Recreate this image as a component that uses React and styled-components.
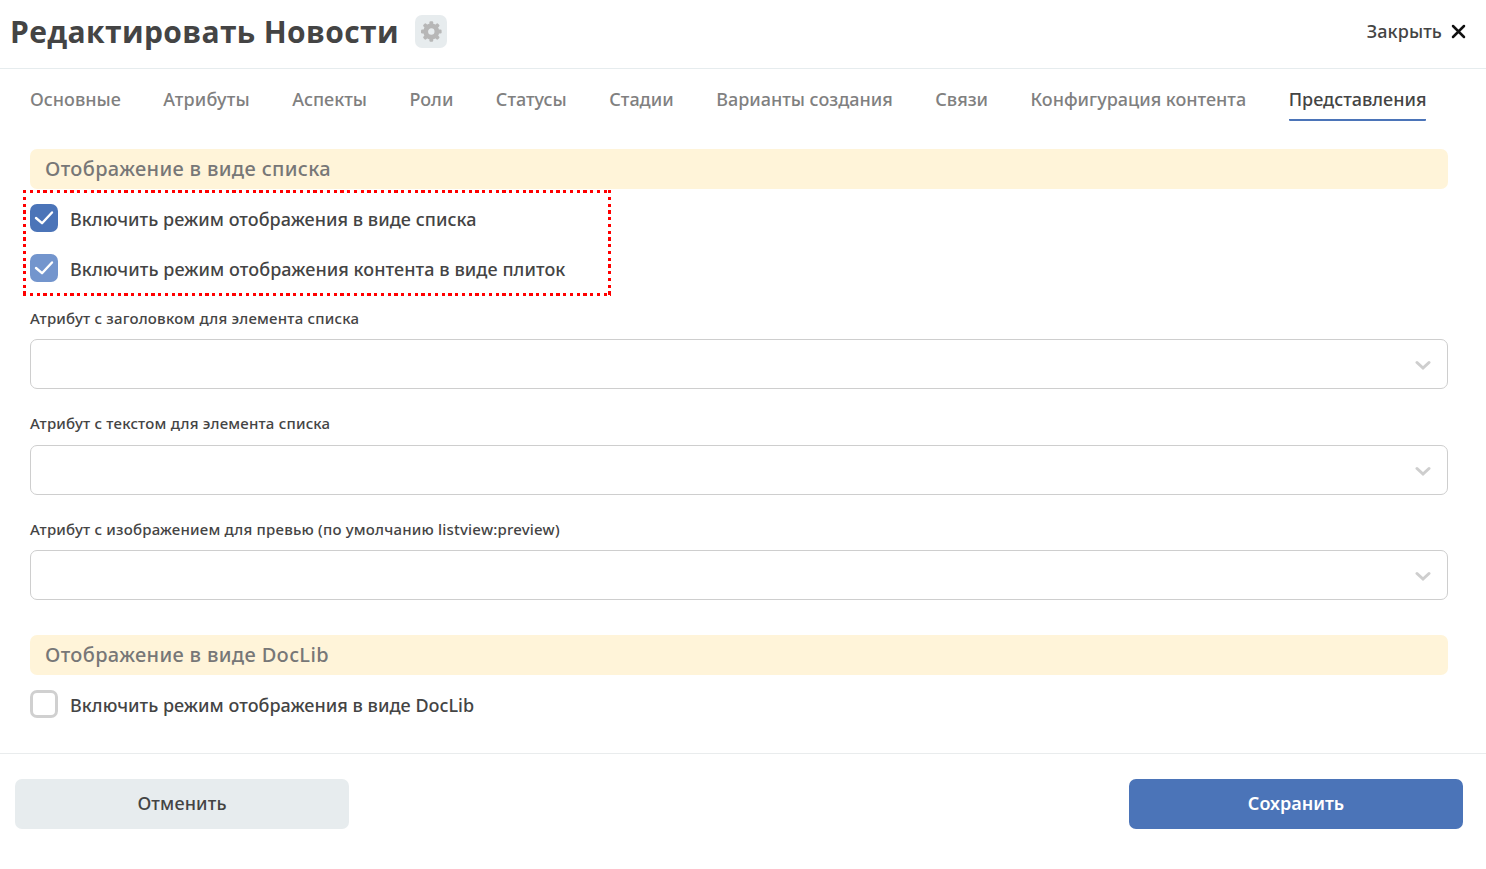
import React from "react";
import styled, { createGlobalStyle } from "styled-components";

const Global = createGlobalStyle`
  * { box-sizing: border-box; }
  body { margin: 0; background: #fff; color: #444; font-family: "Noto Sans", "Open Sans", sans-serif; font-weight: 500; }
  button, input { font: inherit; }
`;
const Dialog = styled.div`
  height: 869px;
  display: flex;
  flex-direction: column;
  background: #fff;
  overflow: hidden;
`;
const Header = styled.header`
  height: 69px;
  flex: none;
  display: flex;
  align-items: flex-start;
  padding: 0 20px 0 10px;
  border-bottom: 1px solid #e6ecee;
`;
const Title = styled.h1`
  width: 389px;
  margin: 11px 16px 0 0;
  font-family: "Open Sans", sans-serif;
  font-size: 30px;
  line-height: 41px;
  font-weight: 700;
  letter-spacing: 0.36px;
  white-space: nowrap;
`;
const SettingsButton = styled.button`
  width: 32px;
  height: 33px;
  margin-top: 15px;
  padding: 0;
  border: 0;
  border-radius: 7px;
  background: #e7ecee;
  display: grid;
  place-items: center;
`;
const CloseButton = styled.button`
  margin: 19px 0 0 auto;
  padding: 0;
  border: 0;
  background: none;
  color: #444;
  display: flex;
  align-items: center;
  gap: 9px;
  font-size: 18px;
  line-height: 25px;
  letter-spacing: 0.1px;
`;
const Tabs = styled.nav`
  height: 80px;
  flex: none;
  display: flex;
  align-items: flex-start;
  gap: 42.5px;
  padding: 18px 30px 0;
`;
const Tab = styled.a`
  height: 34px;
  font-size: 18px;
  line-height: 25px;
  letter-spacing: ${(p) => p.$tracking || 0}px;
  white-space: nowrap;
  color: ${(p) => (p.$active ? "#444" : "#808080")};
  border-bottom: 2px solid ${(p) => (p.$active ? "#4b74b8" : "transparent")};
  border-radius: 1px;
`;
const Content = styled.main`
  height: 604px;
  flex: none;
  padding: 0 38px 0 30px;
`;
const SectionTitle = styled.h2`
  height: 40px;
  margin: 0;
  margin-top: ${(p) => p.$top || 0}px;
  padding-left: 15px;
  border-radius: 7px;
  background: #fff4d9;
  color: #777;
  font-size: 20px;
  line-height: 39px;
  font-weight: 500;
  letter-spacing: 0.35px;
`;
const Highlighted = styled.div`
  position: relative;
`;
const DottedFrame = styled.svg`
  position: absolute;
  left: -7px;
  top: 1px;
  pointer-events: none;
`;
const CheckRow = styled.label`
  display: flex;
  gap: 12px;
  padding-top: 15px;
  height: 50px;
  font-size: 18px;
  line-height: 31px;
  letter-spacing: ${(p) => p.$tracking}px;
  white-space: nowrap;
`;
const Box = styled.span`
  width: 28px;
  height: 28px;
  flex: none;
  border-radius: 7px;
  background: ${(p) => p.$fill || "#fff"};
  border: ${(p) => (p.$fill ? "0" : "3px solid #d0d0d0")};
  display: grid;
  place-items: center;
`;
const Fields = styled.div`
  height: 333px;
  padding-top: 16px;
`;
const Field = styled.div`
  height: 105.4px;
`;
const FieldLabel = styled.div`
  height: 34.2px;
  font-size: 15px;
  line-height: 26px;
  letter-spacing: 0.2px;
`;
const Select = styled.div`
  height: 50px;
  border: 1px solid #cecece;
  border-radius: 7px;
  padding: 3px 16px 0 0;
  display: flex;
  align-items: center;
  justify-content: flex-end;
`;
const Footer = styled.footer`
  flex: 1;
  display: flex;
  justify-content: space-between;
  align-items: flex-start;
  padding: 25px 23px 0 15px;
  border-top: 1px solid #e9eced;
`;
const Button = styled.button`
  width: 334px;
  height: 50px;
  padding: 0 0 2px;
  border: 0;
  border-radius: 7px;
  font-size: 18px;
  line-height: 48px;
  font-weight: ${(p) => (p.$primary ? 600 : 500)};
  letter-spacing: ${(p) => (p.$primary ? 0 : 0.15)}px;
  color: ${(p) => (p.$primary ? "#fff" : "#444")};
  background: ${(p) => (p.$primary ? "#4b74b8" : "#e7ecee")};
`;

const tabs = ["Основные", "Атрибуты", "Аспекты", "Роли", "Статусы", "Стадии", "Варианты создания", "Связи", "Конфигурация контента", "Представления"];
const fields = [
  "Атрибут с заголовком для элемента списка",
  "Атрибут с текстом для элемента списка",
  "Атрибут с изображением для превью (по умолчанию listview:preview)",
];

const Gear = () => (
  <svg width="22" height="22" viewBox="0 0 22 22" fill="none">
    <circle cx="11.3" cy="10.5" r="5.6" stroke="#b7b7b7" strokeWidth="4.8" />
    {[0, 45, 90, 135, 180, 225, 270, 315].map((a) => (
      <rect key={a} x="9.4" y="0.2" width="3.8" height="4" rx="1.2" fill="#b7b7b7" transform={`rotate(${a} 11.3 10.5)`} />
    ))}
  </svg>
);
const Cross = () => (
  <svg width="15" height="15" viewBox="0 0 15 15" fill="none">
    <path d="M2 2L13 13M13 2L2 13" stroke="#111" strokeWidth="2.5" strokeLinecap="round" />
  </svg>
);
const Check = () => (
  <svg width="28" height="28" viewBox="0 0 28 28" fill="none">
    <path d="M6 14L12 19.2L22 8.5" stroke="#fff" strokeWidth="2.4" strokeLinecap="round" strokeLinejoin="round" />
  </svg>
);
const Chevron = () => (
  <svg width="17" height="11" viewBox="0 0 17 11" fill="none">
    <path d="M3 2.5L9 8L15 2.5" stroke="#cecece" strokeWidth="3" strokeLinecap="round" />
  </svg>
);

function Checkbox({ fill, tracking, children }) {
  return (
    <CheckRow $tracking={tracking}>
      <Box $fill={fill}>{fill && <Check />}</Box>
      {children}
    </CheckRow>
  );
}

export default function App() {
  return (
    <Dialog>
      <Global />
      <Header>
        <Title>Редактировать Новости</Title>
        <SettingsButton><Gear /></SettingsButton>
        <CloseButton>Закрыть <Cross /></CloseButton>
      </Header>
      <Tabs>
        {tabs.map((t, i) => <Tab key={t} $active={i === 9} $tracking={i === 1 ? 0.2 : 0}>{t}</Tab>)}
      </Tabs>
      <Content>
        <SectionTitle>Отображение в виде списка</SectionTitle>
        <Highlighted>
          <Checkbox fill="#4b74b8" tracking={0.04}>Включить режим отображения в виде списка</Checkbox>
          <Checkbox fill="#7395cd" tracking={0.07}>Включить режим отображения контента в виде плиток</Checkbox>
          <DottedFrame width="588" height="106" viewBox="0 0 588 106" fill="none">
            <path d="M0 1.5H588M0 104.5H588M1.5 0V106M586.5 0V106" stroke="#f00" strokeWidth="3" strokeDasharray="3.3 3.45" shapeRendering="crispEdges" />
          </DottedFrame>
        </Highlighted>
        <Fields>
          {fields.map((f) => (
            <Field key={f}>
              <FieldLabel>{f}</FieldLabel>
              <Select><Chevron /></Select>
            </Field>
          ))}
        </Fields>
        <SectionTitle $top={13}>Отображение в виде DocLib</SectionTitle>
        <Checkbox tracking={0.03}>Включить режим отображения в виде DocLib</Checkbox>
      </Content>
      <Footer>
        <Button>Отменить</Button>
        <Button $primary>Сохранить</Button>
      </Footer>
    </Dialog>
  );
}
